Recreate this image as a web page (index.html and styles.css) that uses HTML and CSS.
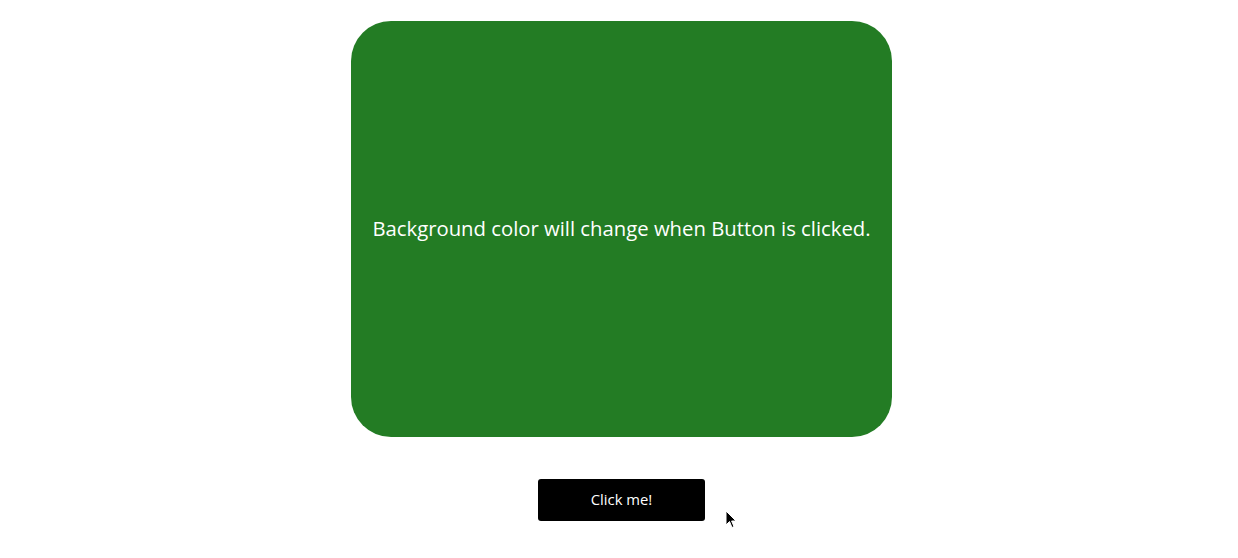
FILE: index.html
```html
<!DOCTYPE html>
<html>
<head>
<meta charset="utf-8">
<link rel="stylesheet" href="styles.css">
</head>
<body>
<div class="page">
  <div class="box">Background color will change when Button is clicked.</div>
  <button class="btn">Click me!</button>
</div>
<svg class="cursor" width="12" height="19" viewBox="0 0 12 19"><path d="M1 1 L1 15 L4.5 11.5 L7 17.5 L9 16.6 L6.6 11 L11 11 Z" fill="#000" stroke="#fff" stroke-width="1"/></svg>
</body>
</html>
```
FILE: styles.css
```css
html, body { margin: 0; padding: 0; background: #fff; }
body { position: relative; width: 1238px; height: 558px; overflow: hidden; font-family: "Open Sans", "DejaVu Sans", sans-serif; }
.page { display: flex; flex-direction: column; align-items: center; padding-top: 21px; padding-left: 5px; }
.box { box-sizing: border-box; width: 541px; height: 416px; padding-bottom: 2px; background: #237c24; border-radius: 40px; color: #fff; display: flex; align-items: center; justify-content: center; font-size: 20.3px; }
.btn { margin-top: 42px; width: 167px; height: 42px; background: #000; color: #fff; border: none; border-radius: 3px; font-family: "Open Sans", sans-serif; font-size: 14.8px; padding: 0 0 2px; }
.cursor { position: absolute; left: 725px; top: 510px; }
```
